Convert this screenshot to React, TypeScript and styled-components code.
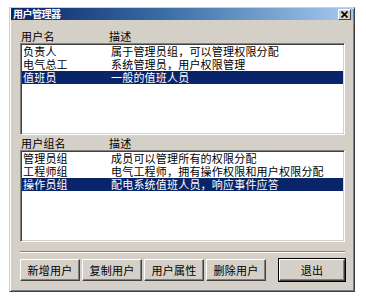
import { FC } from "react";
import styled, { createGlobalStyle } from "styled-components";

const users = [
  { name: "负责人", desc: "属于管理员组，可以管理权限分配" },
  { name: "电气总工", desc: "系统管理员，用户权限管理" },
  { name: "值班员", desc: "一般的值班人员" },
];

const groups = [
  { name: "管理员组", desc: "成员可以管理所有的权限分配" },
  { name: "工程师组", desc: "电气工程师，拥有操作权限和用户权限分配" },
  { name: "操作员组", desc: "配电系统值班人员，响应事件应答" },
];

const actions = ["新增用户", "复制用户", "用户属性", "删除用户"];

type Item = { name: string; desc: string };

const ListSection: FC<{ title: string; items: Item[]; selected: number }> = ({
  title,
  items,
  selected,
}) => (
  <>
    <ColumnHeader>
      <NameCell>{title}</NameCell>
      <span>描述</span>
    </ColumnHeader>
    <ListBox>
      {items.map((item, i) => (
        <ListRow key={item.name} $selected={i === selected}>
          <NameCell>{item.name}</NameCell>
          <span>{item.desc}</span>
        </ListRow>
      ))}
    </ListBox>
  </>
);

const App: FC = () => (
  <>
    <GlobalStyle />
    <Window>
      <TitleBar>
        <TitleText>用户管理器</TitleText>
        <CloseButton>
          <svg width="7" height="7" viewBox="0 0 7 7">
            <path d="M0.5 0.5L6.5 6.5M6.5 0.5L0.5 6.5" stroke="#000" strokeWidth="1.6" />
          </svg>
        </CloseButton>
      </TitleBar>
      <Body>
        <ListSection title="用户名" items={users} selected={2} />
        <Spacer />
        <ListSection title="用户组名" items={groups} selected={2} />
        <Separator />
        <ButtonRow>
          {actions.map((a) => (
            <Button key={a}>{a}</Button>
          ))}
          <ExitButton>退出</ExitButton>
        </ButtonRow>
      </Body>
    </Window>
  </>
);

export default App;

const GlobalStyle = createGlobalStyle`
  html, body {
    margin: 0;
    background: #ffffff;
  }
  body {
    font-family: "Noto Sans CJK SC", "DejaVu Sans", sans-serif;
    font-size: 11px;
    letter-spacing: 0.2px;
    color: #000;
  }
`;

const Window = styled.div`
  box-sizing: border-box;
  margin: 7px 0 0 9px;
  width: 346px;
  height: 285px;
  background: #d4d0c8;
  border: 1px solid;
  border-color: #d4d0c8 #404040 #404040 #d4d0c8;
  box-shadow: inset 1px 1px #ffffff, inset -1px -1px #808080;
  display: flex;
  flex-direction: column;
`;

const TitleBar = styled.div`
  height: 12px;
  margin: 0 1px;
  padding: 0 2px 0 2px;
  background: linear-gradient(to right, #0a246a 0%, #3a6ea5 45%, #a6caf0 100%);
  display: flex;
  align-items: center;
  justify-content: space-between;
`;

const TitleText = styled.span`
  color: #ffffff;
  font-weight: bold;
  font-size: 10px;
  line-height: 12px;
  letter-spacing: -0.5px;
`;

const CloseButton = styled.div`
  box-sizing: border-box;
  width: 13px;
  height: 11px;
  background: #d4d0c8;
  border: 1px solid;
  border-color: #ffffff #404040 #404040 #ffffff;
  display: flex;
  align-items: center;
  justify-content: center;
`;

const Body = styled.div`
  flex: 1;
  display: flex;
  flex-direction: column;
  padding: 9px 9px 0 10px;
`;

const ColumnHeader = styled.div`
  display: flex;
  height: 14px;
  line-height: 14px;
  padding-left: 1px;
`;

const NameCell = styled.span`
  width: 88px;
  flex-shrink: 0;
`;

const ListBox = styled.div`
  box-sizing: border-box;
  height: 92px;
  background: #ffffff;
  border: 1px solid;
  border-color: #808080 #ffffff #ffffff #808080;
  box-shadow: inset 1px 1px #404040, inset -1px -1px #d4d0c8;
  padding: 1px 1px 0 1px;
`;

const ListRow = styled.div<{ $selected: boolean }>`
  display: flex;
  height: 13px;
  line-height: 13px;
  padding-left: 1px;
  white-space: nowrap;
  background: ${(p) => (p.$selected ? "#0a246a" : "transparent")};
  color: ${(p) => (p.$selected ? "#ffffff" : "#000000")};
`;

const Spacer = styled.div`
  height: 1px;
`;

const Separator = styled.div`
  margin-top: 9px;
  height: 0;
  border-top: 1px solid #808080;
  border-bottom: 1px solid #ffffff;
`;

const ButtonRow = styled.div`
  display: flex;
  gap: 2px;
  margin-top: 6px;
`;

const Button = styled.div`
  box-sizing: border-box;
  width: 60px;
  height: 22px;
  background: #d4d0c8;
  border: 1px solid;
  border-color: #ffffff #404040 #404040 #ffffff;
  box-shadow: inset -1px -1px #808080;
  display: flex;
  align-items: center;
  justify-content: center;
`;

const ExitButton = styled(Button)`
  width: 66px;
  margin-left: auto;
  outline: 1px solid #000000;
  outline-offset: 0;
`;
